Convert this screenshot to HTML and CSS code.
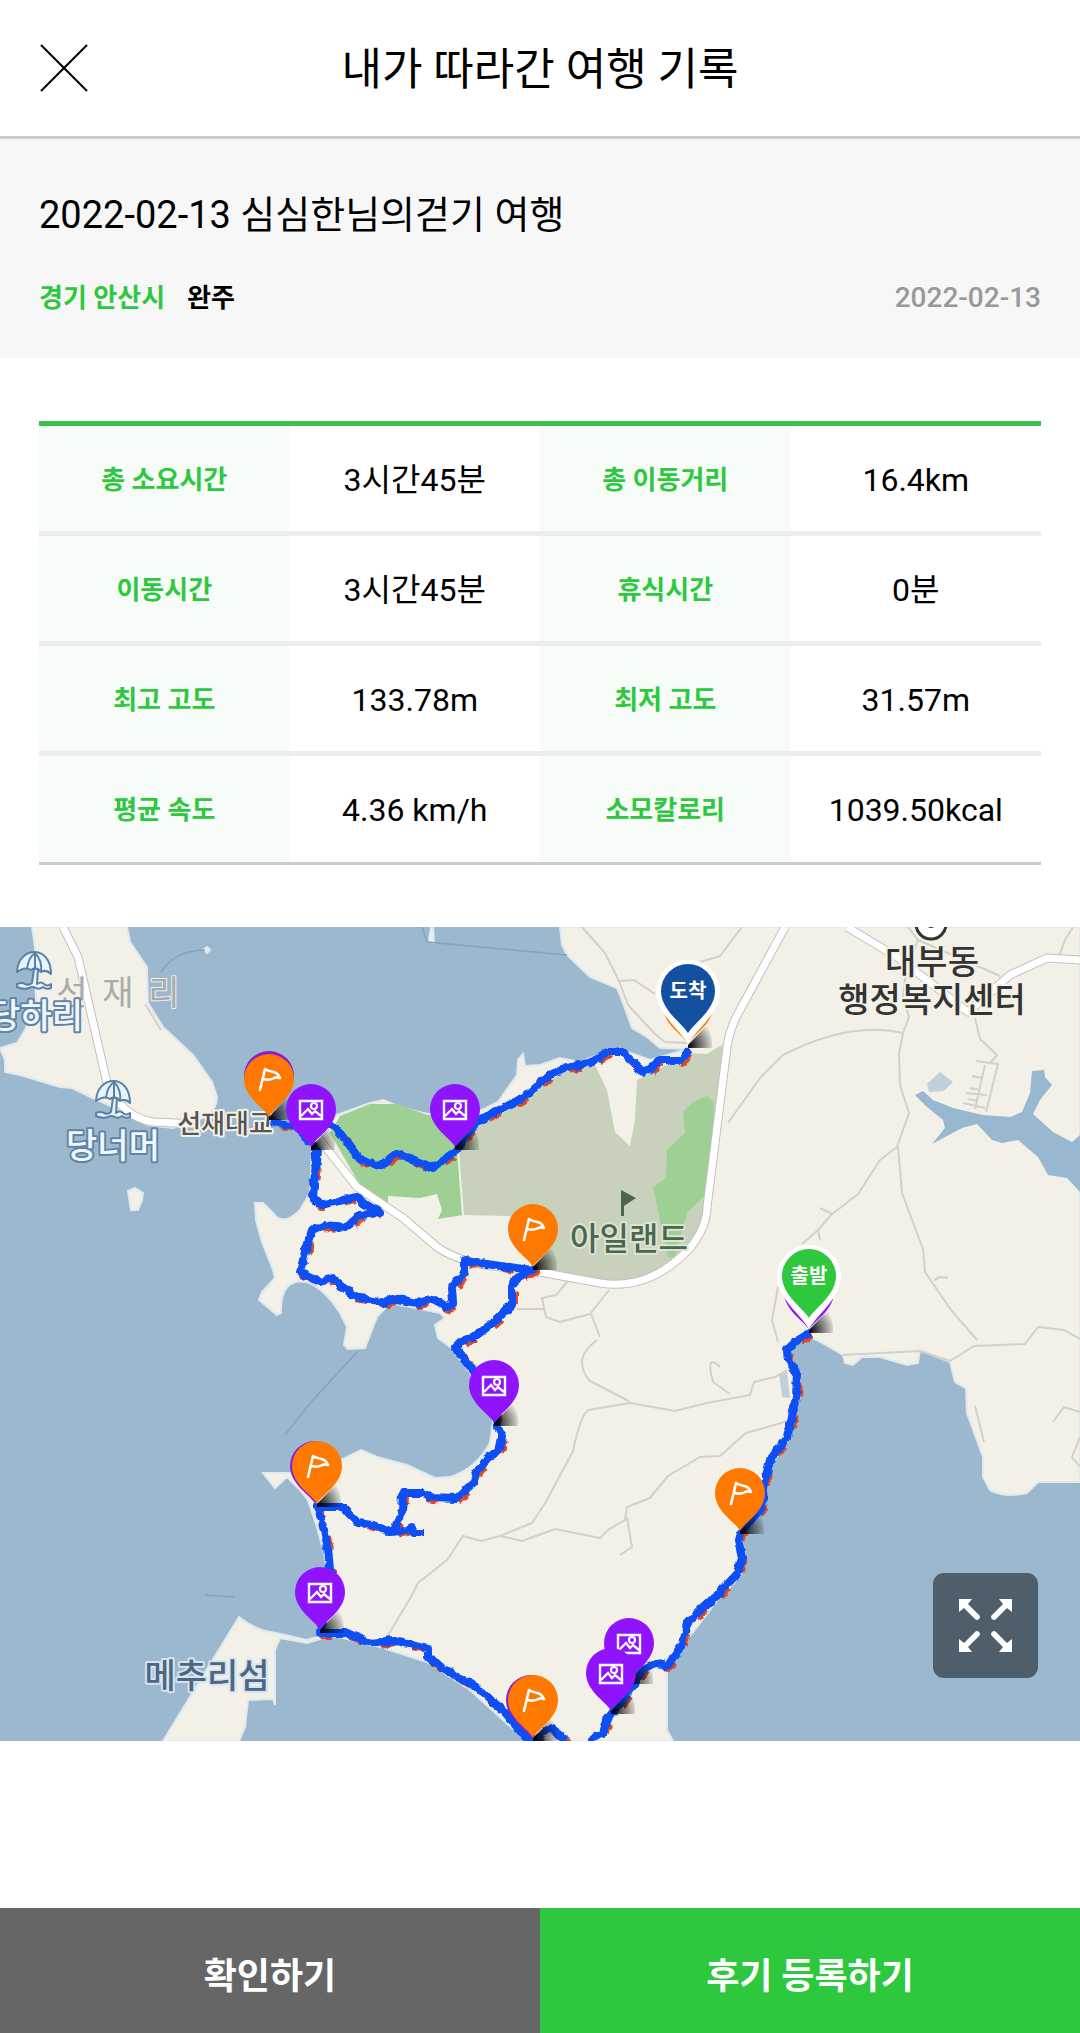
FILE: index.html
```
<!DOCTYPE html>
<html lang="ko">
<head>
    <meta charset="UTF-8">
    <meta name="viewport" content="width=device-width, initial-scale=1.0">
    <title>내가 따라간 여행 기록</title>
    <link rel="stylesheet" href="styles.css">
</head>
<body>
    <header class="header">
        <button class="close-button" type="button" aria-label="닫기">
            <svg width="48" height="48" viewBox="0 0 48 48"><path d="M1 1 47 47M47 1 1 47" stroke="#000" stroke-width="2" fill="none"/></svg>
        </button>
        <h1>내가 따라간 여행 기록</h1>
    </header>

    <section class="summary">
        <h2>2022-02-13 심심한님의걷기 여행</h2>
        <div class="meta">
            <span class="region">경기 안산시</span>
            <span class="state">완주</span>
            <time class="date" datetime="2022-02-13">2022-02-13</time>
        </div>
    </section>

    <table class="record">
        <tr>
            <th scope="row">총 소요시간</th><td>3시간45분</td>
            <th scope="row">총 이동거리</th><td>16.4km</td>
        </tr>
        <tr>
            <th scope="row">이동시간</th><td>3시간45분</td>
            <th scope="row">휴식시간</th><td>0분</td>
        </tr>
        <tr>
            <th scope="row">최고 고도</th><td>133.78m</td>
            <th scope="row">최저 고도</th><td>31.57m</td>
        </tr>
        <tr>
            <th scope="row">평균 속도</th><td>4.36 km/h</td>
            <th scope="row">소모칼로리</th><td>1039.50kcal</td>
        </tr>
    </table>

    <div class="map">
        <svg class="map-canvas" viewBox="0 0 1080 814" role="img" aria-label="여행 경로 지도">
            <defs>
                <radialGradient id="shade" gradientUnits="userSpaceOnUse" cx="0" cy="0" r="27">
                    <stop offset="0" stop-color="#000"/>
                    <stop offset="0.3" stop-color="#000" stop-opacity="0.7"/>
                    <stop offset="1" stop-color="#000" stop-opacity="0"/>
                </radialGradient>
                <filter id="rough" x="-5%" y="-5%" width="110%" height="110%">
                    <feTurbulence type="fractalNoise" baseFrequency="0.12" numOctaves="2" seed="4"/>
                    <feDisplacementMap in="SourceGraphic" scale="6" xChannelSelector="R" yChannelSelector="G"/>
                </filter>
                <path id="track" d="M810 406 795 415 787 423 788 433 797 446 796 470 792 490 787 510 770 533 765 553 762 580 740 606 738 613 742 630 738 646 720 665 693 690 687 696 683 716 667 740 662 736 653 738 643 743 627 766 607 793 603 806 590 814M567 814 550 801 537 811 525 810 503 783 477 761 443 741 428 731 428 721 393 713 370 716 347 706 320 706 330 643 328 620 318 580 343 580 358 596 373 598 390 605 407 603 411 601 415 606 424 606M393 605 402 586 403 566 423 566 430 570 457 571 473 556 477 545 487 533 500 520 502 510 497 500 495 480 475 446 455 420 460 415 477 408 493 396 512 378 512 360 517 351 533 343 493 338 465 333 465 345 452 360 453 376 447 381 435 372 417 376 392 371 383 376 360 371 350 366 333 351 320 355 300 345 305 325 312 303 323 298 347 300 360 288 380 286 363 276 358 270 320 278 313 270 317 223 297 200 270 194M311 190 332 198 345 212 360 233 380 239 397 226 432 241 457 223 467 206 477 195 497 183 515 175 530 166 547 150 567 140 590 136 607 125 623 125 645 146 660 133 680 133 690 123"/>
                <path id="shadow" d="M0 0 19 -20Q25 -8 24 3L0 3Z" fill="url(#shade)"/>
                <path id="drop" d="M0 0C-3 -8 -25 -19 -25 -38A25 25 0 0 1 25 -38C25 -19 3 -8 0 0Z"/>
                <g id="photo">
                    <use href="#shadow"/>
                    <use href="#drop" fill="#9013fe"/>
                    <path d="M-11 -46H11V-28H-11ZM-10 -31 -3 -38 1 -33 4 -36 10 -31" fill="none" stroke="#fff" stroke-width="2.4"/>
                    <circle cx="3" cy="-41" r="3" fill="none" stroke="#fff" stroke-width="2.2"/>
                </g>
                <g id="flag">
                    <use href="#shadow"/>
                    <use href="#drop" fill="#ff7800"/>
                    <path d="M-9 -27 -4 -48C1 -44 8 -47 11 -39C5 -42 4 -35 -5 -38" fill="none" stroke="#fff" stroke-width="2.6" stroke-linecap="round" stroke-linejoin="round"/>
                </g>
                <g id="parasol" stroke="#5b80a5" stroke-width="2" stroke-linejoin="round">
                    <path d="M-17 0C-16 -26 17 -28 17 2Q12 -3 7 0Q2 -6 -3 -2Q-9 -6 -17 0Z" fill="#e6f4fd"/>
                    <path d="M-7 -3C-6 -12 -2 -17 1 -19C7 -13 8 -7 7 0M1 -19V-4" fill="none"/>
                    <path d="M0 -3H4L3 12Q7 9 10 12T17 12V16Q12 18 9 15Q5 18 2 16Q-2 14 -5 16Q-10 18 -17 15V12Q-12 10 -9 12Q-5 14 -2 11Z" fill="#e6f4fd"/>
                </g>
                <path id="goal" d="M0 0C-3 -11 -32 -31 -32 -53A32 32 0 0 1 32 -53C32 -31 3 -11 0 0Z"/>
                <path id="goal-inner" d="M0 -12C-6 -22 -27 -35 -27 -54A27 27 0 0 1 27 -54C27 -35 6 -22 0 -12Z"/>
            </defs>

            <rect width="1080" height="814" fill="#9cb8cf"/>

            <!-- land -->
            <g class="land">
                <path d="M32 0 35 20 36 75 25 103 17 116 0 121 5 133 5 145 20 148 60 160 72 161 97 173 127 186 147 198 173 201 205 190Q217 183 217 170L212 155 193 128 163 100 148 76 147 40 130 15 127 0Z"/>
                <path d="M560 0 562 18 567 28 590 50 617 61 623 76 632 101 647 110 660 121 688 122 650 133 620 122 603 126 580 135 560 131 540 138 525 139 523 127 518 133 517 148 498 175 480 184 427 187 403 181 383 173 370 176 337 188 323 196 312 220 310 266 300 283Q283 300 273 286L263 276 255 276 256 293 260 308 262 315 273 343 275 351 262 365 259 373 277 388 281 386Q280 350 307 355 325 362 340 386L347 400 344 418 348 422 365 421 377 390 390 376 440 386 445 391 435 398 438 411 450 420 470 446 493 493 490 516Q476 542 450 550L435 551 407 538 377 530 361 523 343 532 292 546 263 546 275 561 287 550 300 563 308 573 317 600 325 630 327 646 320 706 360 715 380 720 427 735 470 763 503 793 527 814H673L667 803 667 740 687 713 720 670 740 650 745 626 740 606 763 573 770 540 790 510 798 446 787 430 790 416 803 408 817 413 843 428 845 436 853 438 862 430 880 430 907 438 918 436 920 423 950 435 955 455 966 461 967 486 983 530 983 550 990 563Q1005 571 1027 566L1038 555H1080V0Z"/>
                <path d="M239 690Q256 704 276 706L307 713 320 709V712L307 716 280 711 275 723V778L273 772 248 773 245 800 239 814H163Z"/>
                <path d="M128 264 135 261 143 266 142 273 138 283 131 283Z"/>
                <path d="M204 22 207 20 210 23 207 26Z"/>
                <path d="M431 0 429 14 434 16 433 0Z"/>
            </g>

            <!-- golf course and woods -->
            <path d="M458 223 477 195 530 168 567 142 595 138 607 163 615 205 630 219 635 193 637 153 690 126 707 127 725 116 713 220 705 293 690 321 650 353 627 357 600 354 535 341 510 289 463 288Z" fill="#c7d1bb"/>
            <path d="M330 206 340 189 370 177H397L427 188 467 187 458 223 463 288 438 292 442 283 437 267 420 271 388 269 388 281 360 258Z" fill="#9ed094"/>
            <path d="M693 175 707 169 714 175 712 225 707 266 687 286 675 330 668 330 660 293 653 260 666 251 667 223 685 206 683 185Z" fill="#9ed094"/>
            <path d="M458 222 463 289" stroke="#edf3e8" stroke-width="2"/>

            <!-- inlet and ponds -->
            <path d="M915 168 923 164 933 173 953 181 983 188 1010 190 1022 185 1030 166 1032 144 1044 143 1045 150 1052 158 1040 173 1033 187 1053 205 1072 215 1080 208V265L1067 251 1048 248 1038 230 1018 213 1002 216 992 213 977 197 962 201 932 217 945 201 943 193 927 180Z" fill="#98b7d1"/>
            <path d="M940 145 953 155 944 164 929 165 927 157ZM779 447 787 444 790 471 782 470Z" fill="#bed0da"/>

            <!-- sea lines -->
            <path d="M161 45Q174 24 205 23M422 0 427 15 567 28M285 508 312 474 358 424M205 668 234 670" fill="none" stroke="#7fa3c4" stroke-width="1.5"/>

            <!-- small roads -->
            <g class="lane">
                <path d="M582 0 605 26 619 54 628 78 655 107 665 115 688 116M619 54 634 53 655 67 M700 35 720 29 742 0"/>
                <path d="M728 196 760 151 783 128Q850 94 903 106L899 127 900 158 909 186 897 220 880 233 858 267 831 288 818 303 802 317"/>
                <path d="M898 220 902 266 923 322 925 345 951 383 977 413M820 281 832 287M818 303 820 313M934 353 940 350 948 351"/>
                <path d="M903 106 909 90 903 70 906 45 918 13 908 0M918 13 1000 49M1060 27 1065 13 1073 0"/>
                <path d="M975 91 980 112 997 128 990 136 976 134M990 136 998 137 986 185M985 138 975 182M972 149 982 151M970 161 980 163M968 172 978 174M966 166 987 168M963 176 985 181"/>
                <path d="M597 413Q571 432 590 454L627 473 630 476 588 483Q580 490 573 524L547 573 532 596 500 609 481 614 463 609 447 633 418 656 411 670 387 710"/>
                <path d="M630 476 675 484 707 476 750 468 754 455 775 450 787 443M500 609 522 614 555 602 600 611 608 603 625 593 627 580 650 571 668 549 700 530 720 529 746 506 788 494M627 590 632 620 620 628"/>
                <path d="M720 440Q705 425 713 455L730 467M778 360 772 393 778 415M568 354 556 368 542 371 546 390 560 395 590 387 609 363M545 382H517M591 387 600 410"/>
                <path d="M843 428 920 424 950 434 974 419 1025 417 1038 400 1064 403 1080 412M975 479 984 515M1053 495 1064 480 1080 485M1080 510 1072 530 1080 540M145 77 161 103"/>
            </g>

            <!-- main roads -->
            <g class="road-edge">
                <path id="road-west" d="M63 0 78 30 107 156Q122 190 153 195L200 197M316 208 357 260 403 291 437 320Q460 336 500 340L540 345 600 356Q650 364 690 321 707 300 707 280L717 200 727 120Q730 100 740 83L785 0"/>
                <path id="road-east" d="M847 0 897 30 968 85 1010 48 1047 31 1080 33"/>
            </g>
            <g class="road">
                <use href="#road-west"/>
                <use href="#road-east"/>
            </g>

            <!-- place labels -->
            <g text-anchor="middle">
                <text class="place area" x="72 118 164" y="78">선재리</text>
                <use href="#parasol" x="34" y="45"/>
                <use href="#parasol" x="113" y="174"/>
                <text class="place beach" x="36" y="101">당하리</text>
                <text class="place beach" x="113" y="231">당너머</text>
                <text class="place bridge" x="225" y="206">선재대교</text>
                <text class="place islet" x="207" y="761">메추리섬</text>
                <path d="M621 263 636 271 624 279V289H621Z" fill="#4c6650"/>
                <text class="place golf" x="629" y="323">아일랜드</text>
                <circle cx="931" cy="-3" r="15" fill="#fff" stroke="#333" stroke-width="3"/>
                <circle cx="931" cy="-3" r="4" fill="#333"/>
                <text class="place office" x="932" y="47">대부동</text>
                <text class="place office" x="932" y="85">행정복지센터</text>
            </g>

            <!-- walked route over the guide route -->
            <g class="route" filter="url(#rough)">
                <use class="guide" href="#track" x="2" y="2"/>
                <use class="walked" href="#track"/>
            </g>

            <!-- markers -->
            <use href="#drop" x="269" y="187" fill="#8b1bd0"/>
            <use href="#flag" x="269" y="190"/>
            <use href="#photo" x="311" y="220"/>
            <use href="#photo" x="455" y="220"/>
            <use href="#flag" x="533" y="340"/>
            <use href="#photo" x="494" y="496"/>
            <use href="#drop" x="315" y="577" fill="#8b1bd0"/>
            <use href="#flag" x="317" y="577"/>
            <use href="#photo" x="320" y="703"/>
            <use href="#drop" x="531" y="811" fill="#8b1bd0"/>
            <use href="#flag" x="533" y="811"/>
            <use href="#photo" x="629" y="754"/>
            <use href="#photo" x="611" y="784"/>
            <use href="#flag" x="740" y="604"/>
            <g transform="translate(688 118)">
                <use href="#shadow"/>
                <use href="#drop" fill="#ff7800" y="-1"/>
                <use href="#goal" fill="#fff"/>
                <use href="#goal-inner" fill="#1450a0"/>
                <text class="marker-text" y="-47">도착</text>
            </g>
            <g transform="translate(809 403)">
                <use href="#shadow"/>
                <use href="#drop" fill="#9013fe"/>
                <use href="#goal" fill="#fff"/>
                <use href="#goal-inner" fill="#2dc83e"/>
                <text class="marker-text" y="-47">출발</text>
            </g>
        </svg>
        <button class="expand-button" type="button" aria-label="지도 크게 보기">
            <svg width="53" height="53" viewBox="0 0 53 53" fill="#fff">
                <path id="arrow" d="M0 0H13L9 5 20 16Q22 18 20 20 18 22 16 20L5 9 0 13Z"/>
                <use href="#arrow" transform="rotate(90 26.5 26.5)"/>
                <use href="#arrow" transform="rotate(180 26.5 26.5)"/>
                <use href="#arrow" transform="rotate(270 26.5 26.5)"/>
            </svg>
        </button>
    </div>

    <footer class="actions">
        <button class="confirm" type="button">확인하기</button>
        <button class="review" type="button">후기 등록하기</button>
    </footer>
</body>
</html>
```
FILE: styles.css
```
* {
    box-sizing: border-box;
}

body {
    display: flex;
    flex-direction: column;
    min-height: 100vh;
    margin: 0;
    background-color: #fff;
    color: #000;
    font-family: Roboto, "Noto Sans CJK KR", sans-serif;
}

button {
    padding: 0;
    border: none;
    font-family: inherit;
    cursor: pointer;
}

.header {
    display: grid;
    grid-template-columns: 48px 1fr 48px;
    align-items: center;
    padding: 36px 40px;
    border-bottom: 3px solid #ccc;
}

.header h1 {
    margin: 0;
    padding-top: 4px;
    font-size: 44px;
    font-weight: 400;
    line-height: 60px;
    text-align: center;
}

.close-button {
    height: 48px;
    background: none;
}

.close-button svg {
    display: block;
}

.summary {
    padding: 46px 39px 38px;
    background-color: #f7f7f7;
}

.summary h2 {
    margin: 0 0 31px;
    font-size: 38px;
    font-weight: 400;
    line-height: 60px;
}

.meta {
    display: flex;
    align-items: center;
    gap: 22px;
    font-size: 26px;
    font-weight: 700;
    line-height: 44px;
}

.region {
    color: #2dc83e;
}

.date {
    margin-left: auto;
    color: #999;
    font-size: 28px;
    font-weight: 500;
}

.record {
    width: calc(100% - 78px);
    margin: 63px 39px 62px;
    border-collapse: collapse;
    border-top: 5px solid #3bc14b;
    border-bottom: 3px solid #ccc;
    table-layout: fixed;
    text-align: center;
}

.record th,
.record td {
    height: 110px;
    padding: 2px 0 0;
    border-bottom: 5px solid #ededed;
    line-height: 40px;
}

.record tr:last-child th,
.record tr:last-child td {
    border-bottom: 3px solid #ccc;
}

.record th {
    background-color: #f7fcf8;
    color: #2dc83e;
    font-size: 26px;
    font-weight: 700;
}

.record td {
    font-size: 32px;
}

.map {
    position: relative;
}

.map-canvas {
    display: block;
    width: 100%;
    height: auto;
    overflow: hidden;
}

.land {
    fill: #f3f0e8;
    stroke: #dfe9ee;
    stroke-width: 2;
}

.lane,
.road-edge,
.road,
.route {
    fill: none;
    stroke-linejoin: round;
}

.lane {
    stroke: #d2d0cb;
    stroke-width: 2;
}

.road-edge {
    stroke: #c2c0bd;
    stroke-width: 9;
}

/* the road paths are reused, so the stroke only sits on the groups */
.road {
    stroke: #fff;
    stroke-width: 7;
}

.route {
    stroke-width: 8;
}

.guide {
    stroke: #dc4a2a;
    stroke-dasharray: 12 20;
}

.walked {
    stroke: #0b50f5;
}

.place {
    font-size: 34px;
    font-weight: 500;
    paint-order: stroke;
    stroke: #f3f0e8;
    stroke-width: 4;
    stroke-linejoin: round;
}

.area {
    fill: #aaa;
    font-weight: 400;
    stroke-width: 2;
}

.beach {
    fill: #eef8ff;
    stroke: #6283a5;
}

.bridge {
    fill: #555;
    font-size: 26px;
}

.islet {
    fill: #4d6682;
    stroke: #d5e4f0;
}

.golf {
    fill: #4c6650;
    font-size: 32px;
    stroke: #dbe4d3;
}

.office {
    fill: #333;
}

.marker-text {
    fill: #fff;
    font-size: 20px;
    font-weight: 700;
    text-anchor: middle;
}

.expand-button {
    position: absolute;
    right: 42px;
    bottom: 63px;
    display: grid;
    place-items: center;
    width: 105px;
    height: 105px;
    border-radius: 11px;
    background-color: #4f5e6b;
}

.actions {
    display: grid;
    grid-template-columns: 1fr 1fr;
    margin-top: auto;
}

.actions button {
    height: 125px;
    padding-top: 4px;
    color: #fff;
    font-size: 36px;
    font-weight: 700;
}

.confirm {
    background-color: #666;
}

.review {
    background-color: #2dc83e;
}
```
